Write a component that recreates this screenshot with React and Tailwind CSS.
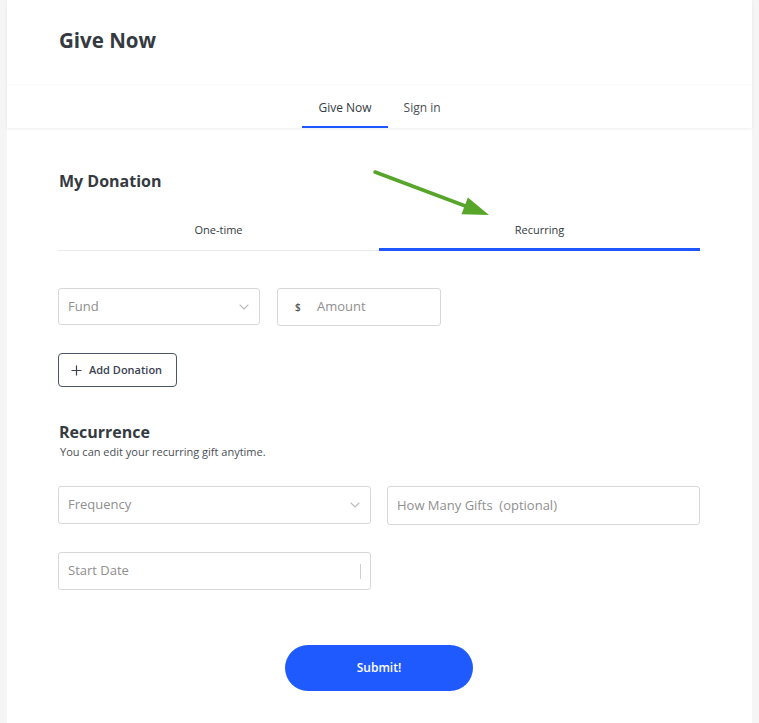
import React from "react";

function Chevron() {
  return (
    <svg width="10" height="6" viewBox="0 0 10 6" fill="none" className="shrink-0">
      <path d="M1 1l4 4 4-4" stroke="#bdbdbd" strokeWidth="1.1" strokeLinecap="round" strokeLinejoin="round" />
    </svg>
  );
}

function GreenArrow() {
  return (
    <svg
      className="pointer-events-none absolute left-0 top-0"
      width="759"
      height="260"
      viewBox="0 0 759 260"
    >
      <line x1="375" y1="172" x2="468" y2="207" stroke="#57a52a" strokeWidth="3.5" strokeLinecap="round" />
      <polygon points="489,215 467.9,197.4 461.5,214.2" fill="#57a52a" />
    </svg>
  );
}

export default function App() {
  return (
    <div
      className="relative min-h-[723px] bg-[#f5f5f5] px-[7px] text-[#343a40]"
      style={{ fontFamily: '"Open Sans", "Liberation Sans", sans-serif' }}
    >
      <div className="min-h-[723px] bg-white">
        <header className="relative z-10 bg-white shadow-[0_1px_3px_rgba(0,0,0,0.07)]">
          <div className="px-[52px] pt-[26px]">
            <h1 className="text-[20.5px] font-bold leading-[28px]">Give Now</h1>
          </div>
          <nav className="mt-[30px] flex justify-center border-t border-[#fafafa] bg-white">
            <a className="border-b-2 border-[#1f57ff] px-4 pt-[15px] pb-[10px] text-[12px] leading-4 text-[#343a40]">
              Give Now
            </a>
            <a className="border-b-2 border-transparent px-4 pt-[15px] pb-[10px] text-[12px] leading-4 text-[#4a4f55]">
              Sign in
            </a>
          </nav>
        </header>

        <main className="pl-[51px] pr-[52px]">
          <h2 className="mt-[41px] ml-px text-[16px] font-bold leading-6">My Donation</h2>

          <div className="mt-[29px] flex items-end">
            <button className="flex-1 border-b border-[#e9e9e9] pb-[12px] text-[11px] leading-4 text-[#343a40]">
              One-time
            </button>
            <button className="flex-1 border-b-[3px] border-[#1f57ff] pb-[10px] text-[11px] leading-4 text-[#343a40]">
              Recurring
            </button>
          </div>

          <div className="mt-[37px] flex items-start gap-[17px]">
            <div className="flex h-[37px] w-[202px] items-center justify-between rounded-[3px] border border-[#d8d8d8] pl-[9px] pr-[10px]">
              <span className="text-[13px] text-[#8f8f8f]">Fund</span>
              <Chevron />
            </div>
            <div className="flex h-[38px] w-[164px] items-center rounded-[3px] border border-[#d8d8d8] pl-[17px]">
              <span className="w-[22px] text-[10px] font-semibold text-[#555]">$</span>
              <span className="text-[13px] text-[#8f8f8f]">Amount</span>
            </div>
          </div>

          <button className="mt-[27px] flex h-[34px] w-[119px] items-center gap-[7px] rounded-[4px] border border-[#4b5568] pl-[12px] text-[11px] font-semibold text-[#3b4252]">
            <svg width="11" height="11" viewBox="0 0 11 11" fill="none">
              <path d="M5.5 0.5v10M0.5 5.5h10" stroke="#3b4252" strokeWidth="1.2" />
            </svg>
            Add Donation
          </button>

          <h2 className="mt-[33px] ml-px text-[16px] font-bold leading-6">Recurrence</h2>
          <p className="ml-[2px] text-[11px] leading-4 text-[#4a4f55]">
            You can edit your recurring gift anytime.
          </p>

          <div className="mt-[26px] grid grid-cols-2 items-start gap-x-[16px] gap-y-[27px]">
            <div className="flex h-[38px] items-center justify-between rounded-[3px] border border-[#d8d8d8] pl-[9px] pr-[10px]">
              <span className="text-[13px] text-[#8f8f8f]">Frequency</span>
              <Chevron />
            </div>
            <div className="flex h-[39px] items-center rounded-[3px] border border-[#d8d8d8] pl-[9px]">
              <span className="whitespace-pre text-[13px] text-[#8f8f8f]">How Many Gifts  (optional)</span>
            </div>
            <div className="flex h-[38px] items-center justify-between rounded-[3px] border border-[#d8d8d8] pl-[9px] pr-[9px]">
              <span className="text-[13px] text-[#8f8f8f]">Start Date</span>
              <span className="h-[15px] w-px bg-[#cfcfcf]" />
            </div>
          </div>

          <div className="mt-[55px] flex justify-center pb-8">
            <button className="h-[46px] w-[188px] rounded-full bg-[#1f5aff] text-[12px] font-semibold text-white">
              Submit!
            </button>
          </div>
        </main>
      </div>
      <GreenArrow />
    </div>
  );
}
